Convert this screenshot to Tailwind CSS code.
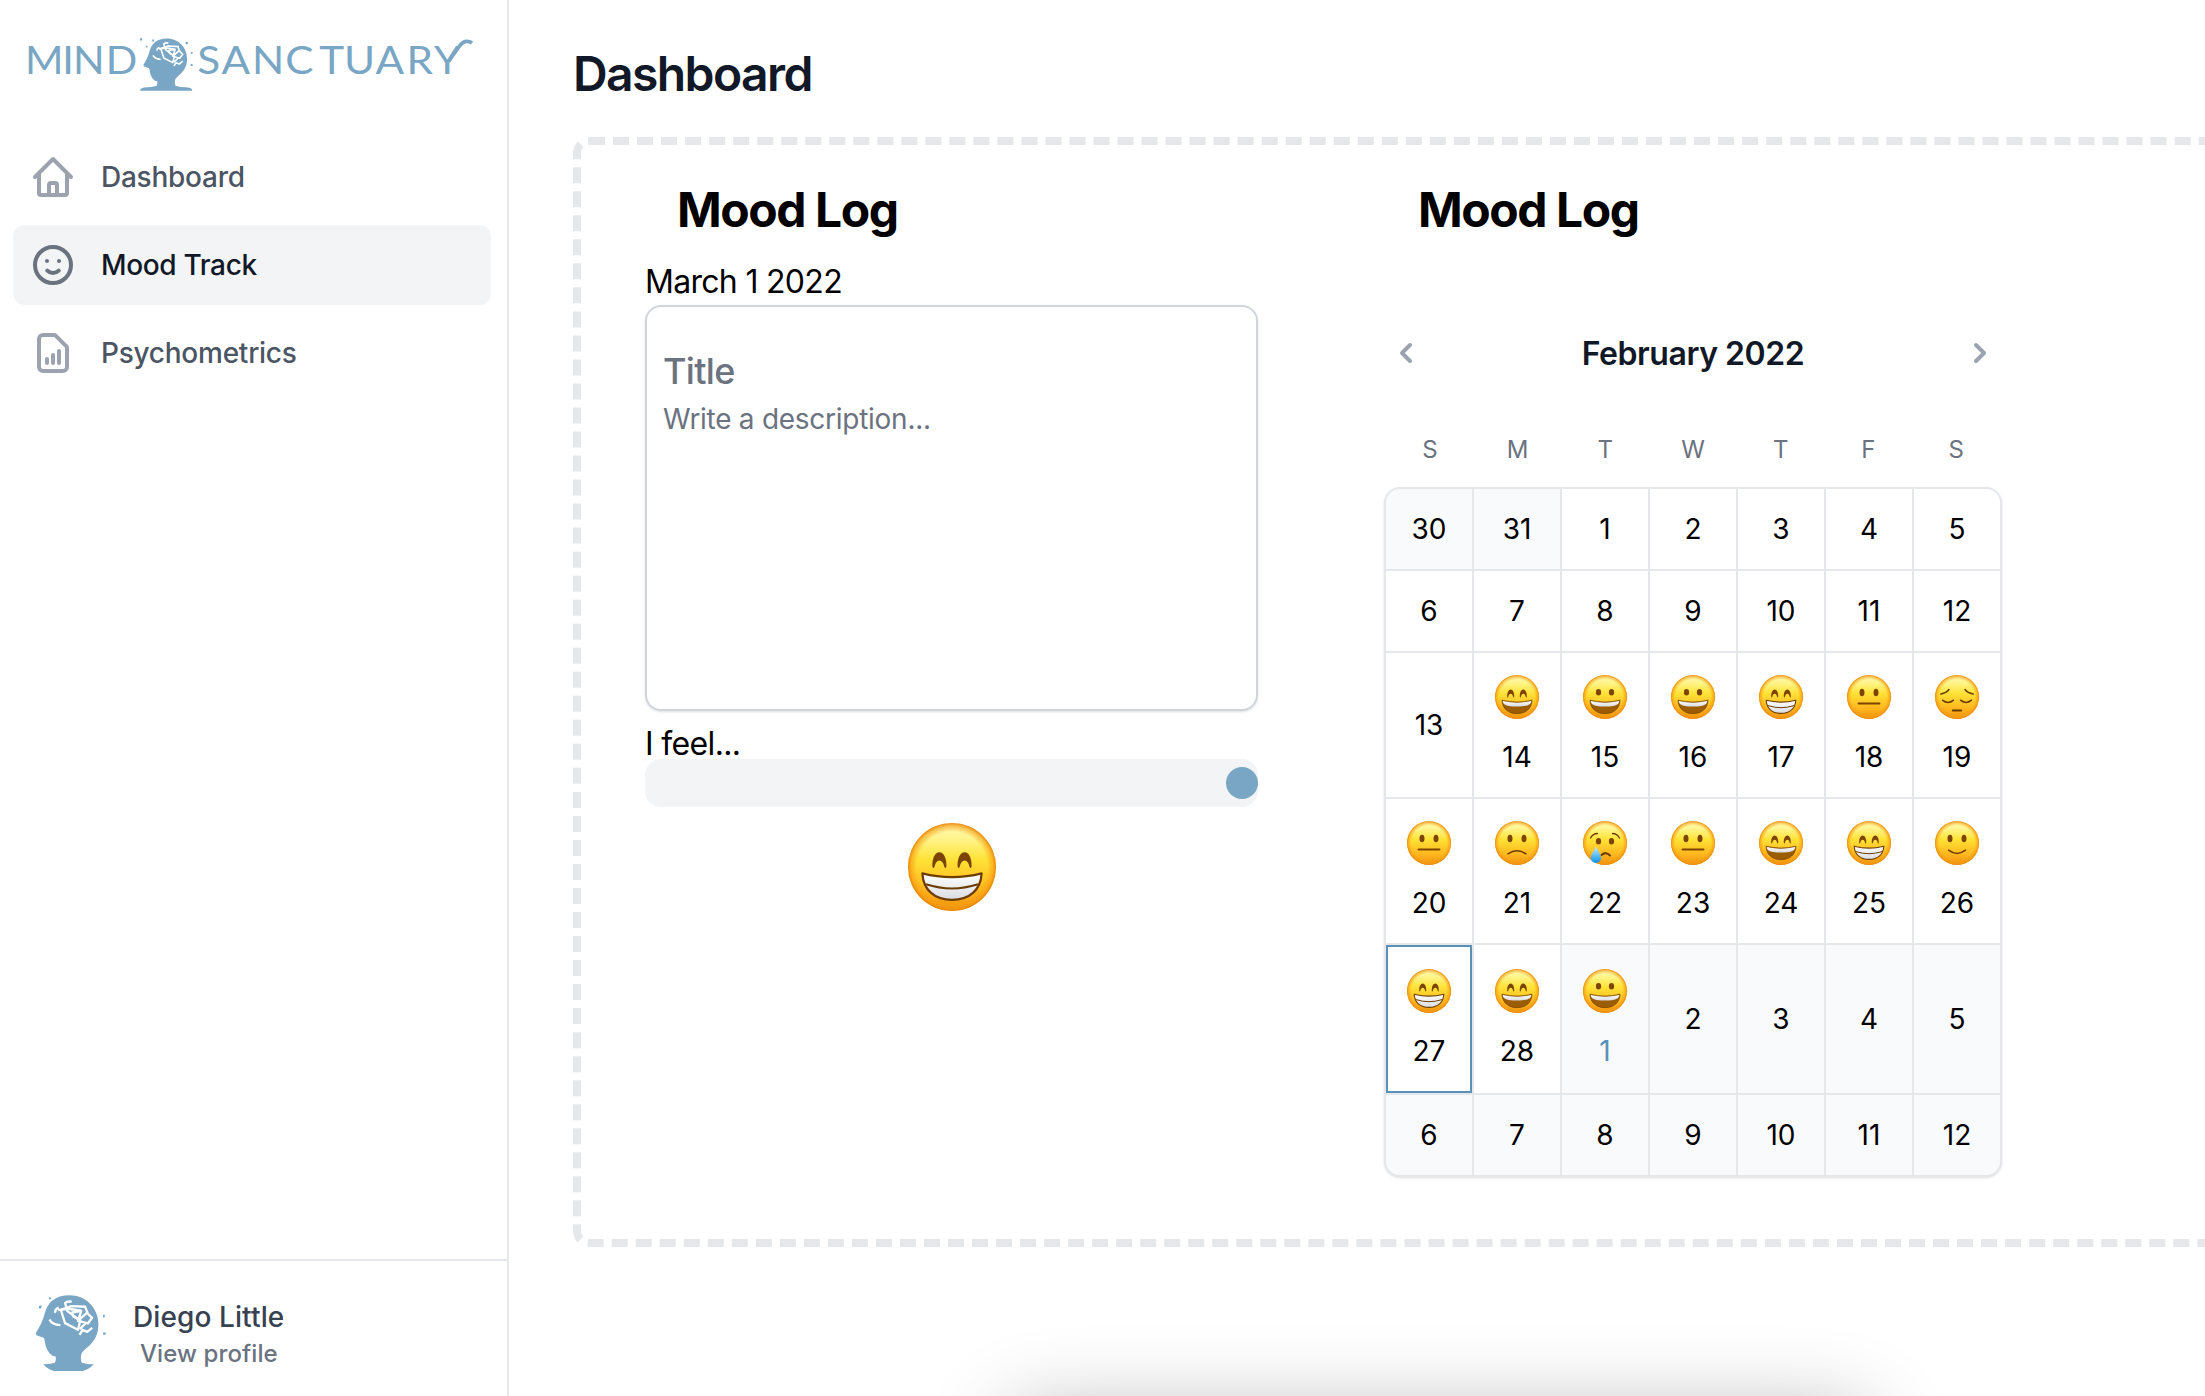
<!DOCTYPE html>
<html lang="en">
<head>
<meta charset="utf-8">
<title>Mind Sanctuary</title>
<script src="https://cdn.jsdelivr.net/npm/@tailwindcss/browser@4"></script>
</head>
<body class="bg-white font-['Inter',sans-serif] text-black">
<svg class="absolute h-0 w-0" aria-hidden="true">
  <defs>
    <linearGradient id="face" x1="0" y1="0" x2="0" y2="1">
      <stop offset="0" stop-color="#fff8b8"/><stop offset=".18" stop-color="#fff48a"/><stop offset=".42" stop-color="#ffe236"/><stop offset=".75" stop-color="#ffb81f"/><stop offset="1" stop-color="#ee900e"/>
    </linearGradient>
    <radialGradient id="rim" cx=".5" cy=".5" r=".5">
      <stop offset=".8" stop-color="#f79a10" stop-opacity="0"/><stop offset=".93" stop-color="#f79a10" stop-opacity=".6"/><stop offset="1" stop-color="#e5820a" stop-opacity=".95"/>
    </radialGradient>
    <linearGradient id="teeth" x1="0" y1="0" x2="0" y2="1"><stop offset="0" stop-color="#fff"/><stop offset="1" stop-color="#d9dce0"/></linearGradient>
    <linearGradient id="tear" x1="0" y1="0" x2="0" y2="1"><stop offset="0" stop-color="#c8efff"/><stop offset="1" stop-color="#0a93ea"/></linearGradient>
    <symbol id="base" viewBox="0 0 44 44"><circle cx="22" cy="22" r="22" fill="url(#face)"/><circle cx="22" cy="22" r="22" fill="url(#rim)"/></symbol>
    <g id="arches" fill="#7d4300"><path d="M12.2 21.8C12 17.5 13.6 14.6 15.7 14.6s3.7 2.9 3.5 7.2c-.1.9-.9.9-1.1 0-.4-1.8-1.2-3-2.4-3s-2 1.2-2.4 3c-.2.9-1 .9-1.1 0z"/><path d="M24.8 21.8c-.2-4.3 1.4-7.2 3.5-7.2s3.7 2.9 3.5 7.2c-.1.9-.9.9-1.1 0-.4-1.8-1.2-3-2.4-3s-2 1.2-2.4 3c-.2.9-1 .9-1.1 0z"/></g>
    <g id="dots" fill="#7d4300"><ellipse cx="15.5" cy="17.3" rx="2.6" ry="3.3"/><ellipse cx="28.5" cy="17.3" rx="2.6" ry="3.3"/></g>
    <g id="dots2" fill="#7d4300"><ellipse cx="15" cy="17.5" rx="2.5" ry="3.8"/><ellipse cx="29" cy="17.5" rx="2.5" ry="3.8"/></g>
    <g id="openmouth"><path d="M7 25.2Q22 29 37 25.2C36.600 33.500 31 38.600 22 38.600S7.400 33.500 7 25.200z" fill="#9c5c00"/><path d="M7.600 25.700Q22 29.300 36.400 25.700C36.200 29.500 33 31.500 22 31.500S7.800 29.500 7.600 25.700z" fill="url(#teeth)"/><path d="M7 25.200Q22 29 37 25.200C36.600 33.500 31 38.600 22 38.600S7.400 33.500 7 25.200z" fill="none" stroke="#7d4700" stroke-width=".8"/></g>
    <symbol id="smile" viewBox="0 0 44 44"><use href="#base"/><use href="#arches"/><use href="#openmouth"/></symbol>
    <symbol id="grin" viewBox="0 0 44 44"><use href="#base"/><use href="#dots"/><use href="#openmouth"/></symbol>
    <symbol id="beam" viewBox="0 0 44 44"><use href="#base"/><use href="#arches"/><path d="M7.200 25.200Q22 29 36.800 25.200C36.400 33.300 31 38.400 22 38.400S7.600 33.300 7.200 25.200z" fill="url(#teeth)" stroke="#6d3c00" stroke-width="1.100" stroke-linejoin="round"/><path d="M9 30.600Q22 34.800 35 30.600" fill="none" stroke="#6d3c00" stroke-width="1"/></symbol>
    <symbol id="neutral" viewBox="0 0 44 44"><use href="#base"/><use href="#dots2"/><path d="M11.500 28.500h21" stroke="#7d4300" stroke-width="1.900" stroke-linecap="round"/></symbol>
    <symbol id="frown" viewBox="0 0 44 44"><use href="#base"/><use href="#dots2"/><path d="M13 32.800Q22 26.800 31 32.800" fill="none" stroke="#6b3a00" stroke-width="1.500" stroke-linecap="round"/></symbol>
    <symbol id="slight" viewBox="0 0 44 44"><use href="#base"/><use href="#dots2"/><path d="M13.500 29.200Q22 35.600 30.500 29.200" fill="none" stroke="#6b3a00" stroke-width="1.500" stroke-linecap="round"/></symbol>
    <symbol id="pensive" viewBox="0 0 44 44"><use href="#base"/><g fill="none" stroke="#6b3a00" stroke-width="1.500" stroke-linecap="round"><path d="M5.800 19Q11.500 18 14 14.500M38.200 19Q32.500 18 30 14.500"/><path d="M7.500 25.200q5.500 4.600 11 0M25.500 25.200q5.500 4.600 11 0"/><path d="M17.800 35.500h8.400" stroke-width="2"/></g></symbol>
    <symbol id="cry" viewBox="0 0 44 44"><use href="#base"/><g transform="translate(0 3)"><use href="#dots"/></g><g fill="none" stroke="#6b3a00" stroke-width="1.300" stroke-linecap="round"><path d="M7.500 17q2.500-4.500 7-4.500M36.500 17q-2.500-4.500-7-4.500"/><path d="M18.500 34q4.500-4 8.500.5" stroke-width="2"/></g><path d="M13 25c1 4 5 7.500 5 12a5.100 5.100 0 0 1-10.200 0c0-4.500 4.200-8 5.200-12z" fill="url(#tear)"/></symbol>
    <!-- head silhouette with tangled thoughts -->
    <g id="head">
      <path fill="#79a6c4" d="M160 371Q169 367 169 357V348Q158 347 150 338Q140 326 137 310L134 294Q133 291 128 290L112 285Q107 282 109 277Q126 250 133 228Q146 165 210 165C262 165 298 205 298 252C298 288 280 309 258 326Q245 336 245 348V357Q246 369 256 371z"/>
      <g fill="none" stroke="#fff" stroke-width="7" stroke-linejoin="round">
        <path d="M150 237Q157 252 183 254M166 217Q168 205 178 202M217 184Q203 182 197 188L204 212L243 240L236 268L197 248L184 208L216 197L260 199"/>
        <path d="M176 209L206 205L246 211L238 237L222 228L219 216L240 213M257 197L266 220L279 232L266 249L236 241L262 218M262 246L241 266M241 283L250 268L264 274L279 262"/>
      </g>
    </g>
  </defs>
</svg>

<div class="relative flex h-[1396px] w-[2205px] overflow-hidden">
  <aside class="flex w-[509px] shrink-0 flex-col border-r-2 border-[#e5e7eb]">
    <div class="h-[137px]">
      <svg class="block" width="507" height="130" viewBox="0 0 507 130" fill="#79a6c4">
        <g font-family="Lato, sans-serif" font-size="39.500">
          <text transform="translate(0 74) scale(1.050 1)" x="23.900 59.300 69.600 100.800">MIND</text>
          <text transform="translate(0 74) scale(1.070 1)" x="184.300 207 235.600 266.500 298.300 321.500 351 380 405.600">SANCTUARY</text>
        </g>
        <path d="M448.500 61.500L459.500 46Q463 41.300 467 41.300Q470 41.300 472 43" fill="none" stroke="#79a6c4" stroke-width="3.700"/>
        <g transform="translate(143.300 38.600) scale(.2305 .2333) translate(-108 -165)">
          <use href="#head"/>
          <path d="M162 368Q145 373 125 373Q98 374 95 384V389H320V384Q317 374 290 373Q268 373 252 368z"/>
          <path d="M94 164h9v9h-9zM147 169h8v8h-8zM119 196h7v7h-7zM292 180h9v9h-9zM314 222h8v8h-8zM314 274h8v8h-8z"/>
        </g>
      </svg>
    </div>
    <nav class="flex flex-1 flex-col gap-2 pr-4 pl-[13px] text-[28px] font-medium tracking-[-0.25px] text-[#4b5563]">
      <a class="flex h-20 items-center gap-6 rounded-xl px-4">
        <svg class="size-12 text-[#9ca3af]" fill="none" viewBox="0 0 24 24" stroke="currentColor" stroke-width="2" stroke-linecap="round" stroke-linejoin="round"><path d="M3 12l2-2m0 0l7-7 7 7M5 10v10a1 1 0 001 1h3m10-11l2 2m-2-2v10a1 1 0 01-1 1h-3m-6 0a1 1 0 001-1v-4a1 1 0 011-1h2a1 1 0 011 1v4a1 1 0 001 1m-6 0h6"/></svg>
        Dashboard
      </a>
      <a class="flex h-20 items-center gap-6 rounded-xl bg-[#f3f4f6] px-4 text-[#111827]">
        <svg class="size-12 text-[#6b7280]" fill="none" viewBox="0 0 24 24" stroke="currentColor" stroke-width="2" stroke-linecap="round" stroke-linejoin="round"><path d="M14.828 14.828a4 4 0 01-5.656 0M9 10h.01M15 10h.01M21 12a9 9 0 11-18 0 9 9 0 0118 0z"/></svg>
        <span class="tracking-[-0.35px]">Mood Track</span>
      </a>
      <a class="flex h-20 items-center gap-6 rounded-xl px-4">
        <svg class="size-12 text-[#9ca3af]" fill="none" viewBox="0 0 24 24" stroke="currentColor" stroke-width="2" stroke-linecap="round" stroke-linejoin="round"><path d="M9 17v-2m3 2v-4m3 4v-6m2 10H7a2 2 0 01-2-2V5a2 2 0 012-2h5.586a1 1 0 01.707.293l5.414 5.414a1 1 0 01.293.707V19a2 2 0 01-2 2z"/></svg>
        Psychometrics
      </a>
    </nav>
    <div class="flex h-[137px] border-t-2 border-[#e5e7eb] pt-[31px] pl-[33px]">
      <svg width="76" height="82" viewBox="100 155 230 245" preserveAspectRatio="none">
        <use href="#head"/>
        <g fill="#79a6c4"><path d="M131 371Q150 371 163 367H252Q262 371 284 371Q270 386 250 391H163Q145 386 131 371z"/>
        <path d="M118 197l9-2-3 9h-6zM148 174l3-4 5 3-3 4h-5zM312 223h5v8h-5zM312 276h8v7h-8z"/></g>
      </svg>
      <div class="ml-6 font-medium">
        <p class="mt-[5px] text-[28px] leading-10 tracking-[0.1px] text-[#374151]">Diego Little</p>
        <p class="mt-px ml-[7px] text-2xl leading-8 tracking-[0.1px] text-[#6b7280]">View profile</p>
      </div>
    </div>
  </aside>

  <main class="flex-1 pt-[42px] pl-16">
    <h1 class="text-5xl leading-[64px] font-semibold tracking-[-1.6px] text-[#111827]">Dashboard</h1>
    <div class="mt-[31px] flex h-[1110px] w-[1800px] rounded-2xl border-8 border-dashed border-[#e5e7eb] pt-[41px] pl-16">
      <section class="w-[613px]">
        <h2 class="pl-8 text-5xl leading-[48px] font-bold tracking-[-1.45px]">Mood Log</h2>
        <p class="mt-6 text-[32px] leading-[48px] tracking-[-0.7px]">March 1 2022</p>
        <div class="-mt-px h-[406px] rounded-2xl border-2 border-[#d1d5db] px-4 pt-9 text-[#6b7280] shadow-sm">
          <p class="text-4xl leading-[56px] font-medium tracking-[-0.7px]">Title</p>
          <p class="text-[28px] leading-10 tracking-[-0.27px]">Write a description...</p>
        </div>
        <p class="mt-[17px] text-[32px] leading-8 tracking-[-0.65px]">I feel...</p>
        <div class="-mt-px flex h-12 items-center justify-end rounded-2xl bg-[#f3f4f6]"><div class="size-8 rounded-full bg-[#79a6c4]"></div></div>
        <svg class="mx-auto mt-4 size-[88px]"><use href="#beam"/></svg>
      </section>

      <section class="ml-[126px] w-[618px]">
        <h2 class="pl-[34px] text-5xl leading-[48px] font-bold tracking-[-1.45px]">Mood Log</h2>
        <div class="mt-[99px] flex h-10 items-center justify-between px-0.5 text-[#9ca3af]">
          <svg class="size-10" viewBox="0 0 20 20" fill="currentColor"><path fill-rule="evenodd" d="M12.707 5.293a1 1 0 010 1.414L9.414 10l3.293 3.293a1 1 0 01-1.414 1.414l-4-4a1 1 0 010-1.414l4-4a1 1 0 011.414 0z"/></svg>
          <h3 class="pt-0.5 text-[32px] leading-10 font-semibold tracking-[-0.45px] text-[#111827]">February 2022</h3>
          <svg class="size-10" viewBox="0 0 20 20" fill="currentColor"><path fill-rule="evenodd" d="M7.293 14.707a1 1 0 010-1.414L10.586 10 7.293 6.707a1 1 0 011.414-1.414l4 4a1 1 0 010 1.414l-4 4a1 1 0 01-1.414 0z"/></svg>
        </div>
        <div class="mt-[53px] mr-0.5 ml-0.5 grid grid-cols-7 text-center text-2xl leading-[48px] text-[#6b7280]">
          <div>S</div><div>M</div><div>T</div><div>W</div><div>T</div><div>F</div><div>S</div>
        </div>
        <div id="days" class="mt-[13px] grid grid-cols-7 grid-rows-[80px_80px_144px_144px_148px_80px] gap-0.5 overflow-hidden rounded-2xl border-2 border-[#e5e7eb] bg-[#e5e7eb] text-[28px] leading-10 shadow-sm"></div>
      </section>
    </div>
  </main>

  <div class="absolute top-[1414px] left-[1010px] h-40 w-[856px] rounded-2xl shadow-[0_0_84px_rgba(0,0,0,0.3)]"></div>
</div>
<script>
  const moods = { 15: 'smile', 16: 'grin', 17: 'grin', 18: 'beam', 19: 'neutral', 20: 'pensive', 21: 'neutral', 22: 'frown', 23: 'cry', 24: 'neutral', 25: 'smile', 26: 'beam', 27: 'slight', 28: 'beam', 29: 'smile', 30: 'grin' };
  const html = [];
  for (let i = 0; i < 42; i++) {
    const day = i < 2 ? 30 + i : i < 30 ? i - 1 : i - 29;
    const outside = i < 2 || i >= 30;
    let cls = 'flex flex-col items-center justify-center';
    cls += outside ? ' bg-[#f9fafb]' : ' bg-white';
    if (i === 28) cls += ' border-2 border-[#5a91b8]';
    if (i === 30) cls += ' text-[#5a91b8]';
    const face = moods[i] ? '<svg class="mt-px mb-[18px] size-11"><use href="#' + moods[i] + '"/></svg>' : '';
    html.push('<div class="' + cls + '">' + face + '<span>' + day + '</span></div>');
  }
  document.getElementById('days').innerHTML = html.join('');
</script>
</body>
</html>
